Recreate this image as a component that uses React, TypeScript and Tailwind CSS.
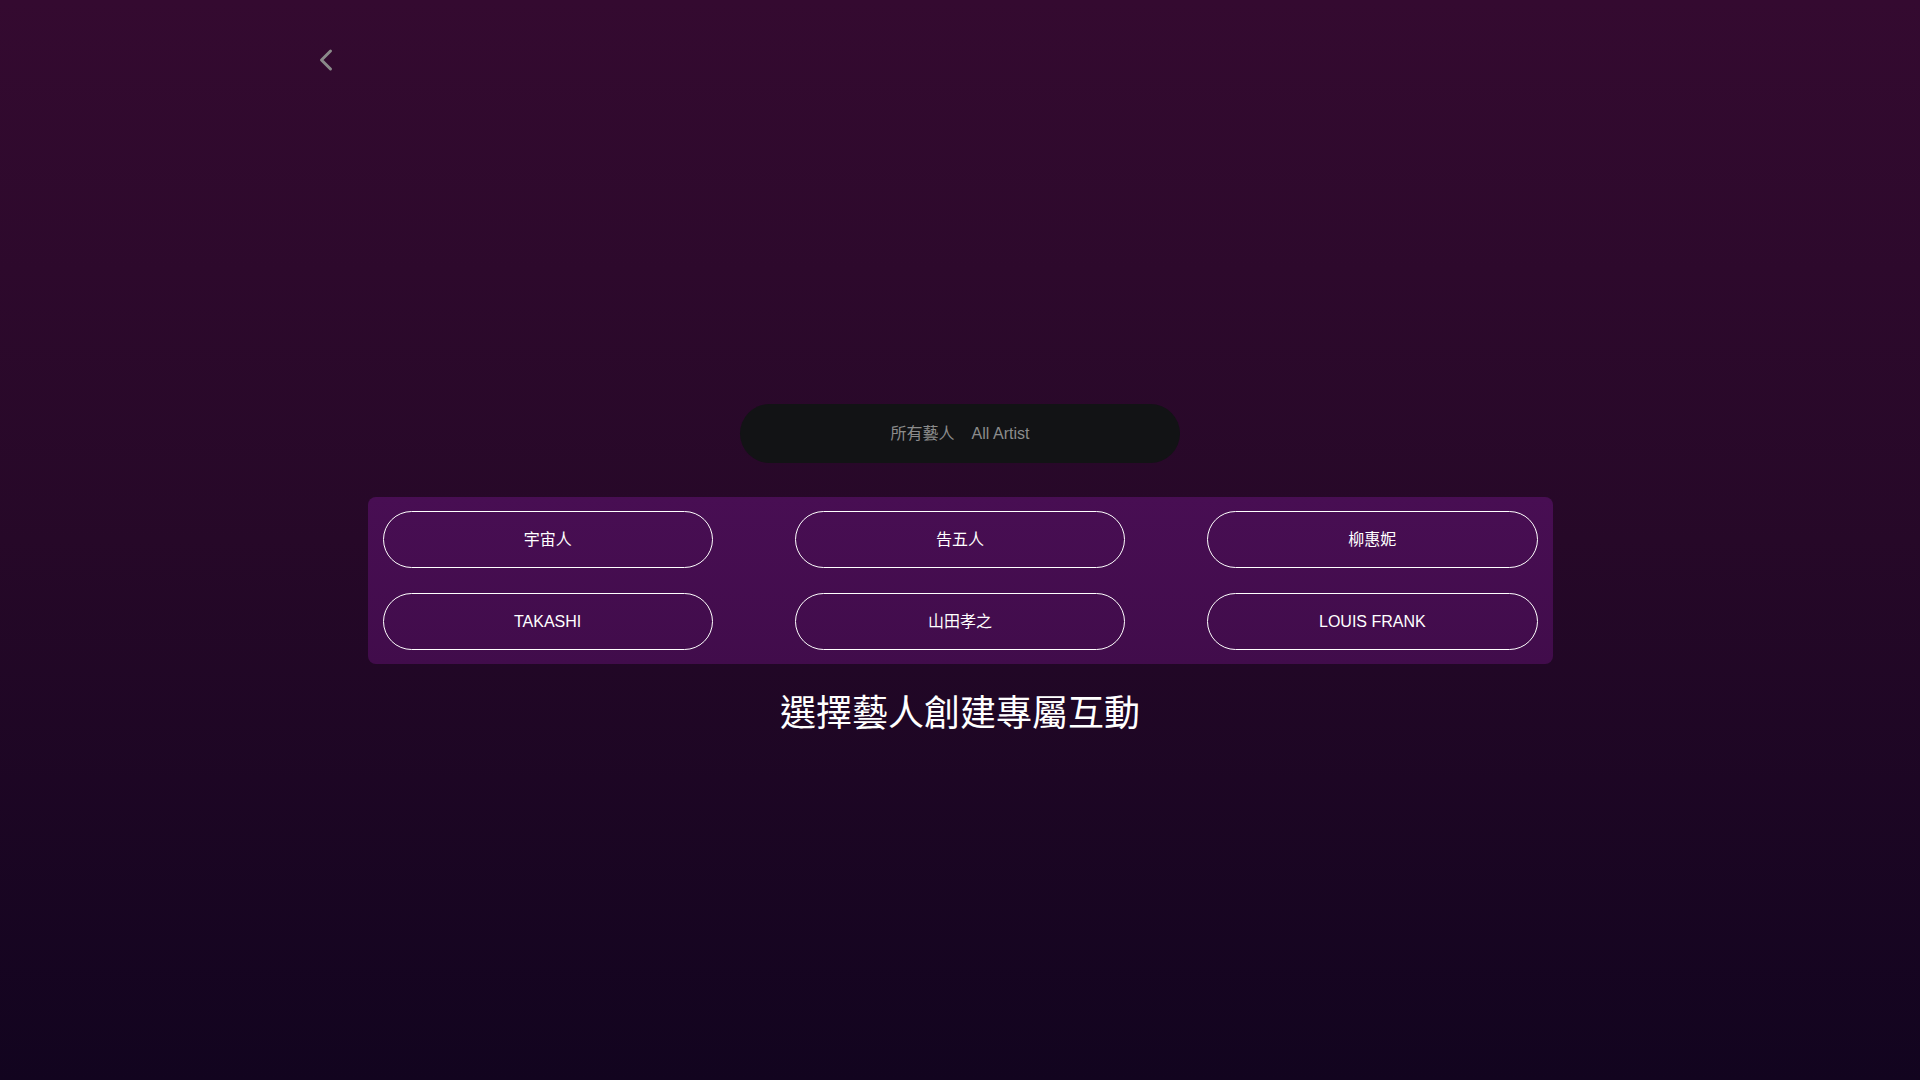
import React from 'react';
import { ChevronLeft } from 'lucide-react';

const artists = ['宇宙人', '告五人', '柳惠妮', 'TAKASHI', '山田孝之', 'LOUIS FRANK'];

export default function App() {
  return (
    <div
      className="min-h-screen w-full bg-gradient-to-b from-[#340a30] via-[#260828] to-[#12041f] text-white"
      style={{ fontFamily: '"Liberation Sans", "Noto Sans CJK TC", sans-serif' }}
    >
      {/* Back */}
      <div className="h-[404px] pl-[308px] pt-[42px]">
        <button className="text-[#8a8a8a]" aria-label="Back">
          <ChevronLeft size={36} strokeWidth={2} />
        </button>
      </div>

      <div className="flex flex-col items-center">
        <div className="flex h-[59px] w-[440px] items-center justify-center gap-[17px] rounded-full bg-[#121315] text-[16px] text-[#8c8c8c]">
          <span>所有藝人</span>
          <span>All Artist</span>
        </div>

        <div className="mt-[34px] grid w-[1185px] grid-cols-3 gap-x-[82px] gap-y-[25px] rounded-lg bg-gradient-to-b from-[#480e53] to-[#410c4b] px-[15px] py-[14px]">
          {artists.map((name) => (
            <button
              key={name}
              className="flex h-[57px] items-center justify-center rounded-full border border-white text-[16px] text-white"
            >
              {name}
            </button>
          ))}
        </div>

        <h1 className="mt-[26px] text-[36px] leading-[48px] font-normal">選擇藝人創建專屬互動</h1>
      </div>
    </div>
  );
}
